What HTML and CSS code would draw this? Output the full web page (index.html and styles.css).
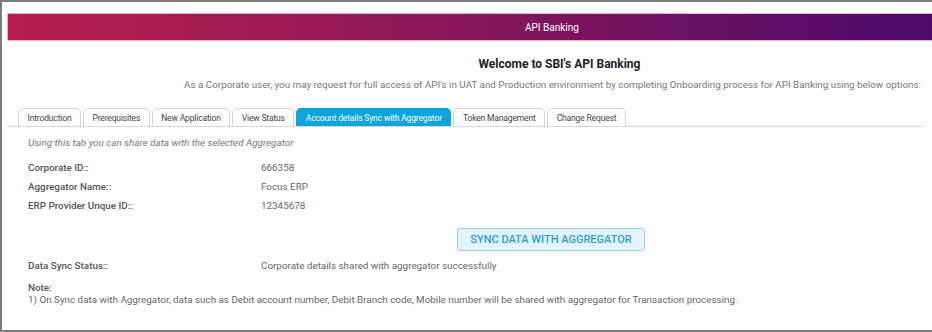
FILE: index.html
```html
<!DOCTYPE html>
<html lang="en">
<head>
  <meta charset="UTF-8" />
  <title>API Banking</title>
  <link rel="stylesheet" href="styles.css">
</head>
<body>
  <div class="frame">
    <header class="topbar">
      <span>API Banking</span>
    </header>

    <div class="intro">
      <h1>Welcome to SBI's API Banking</h1>
      <p>As a Corporate user, you may request for full access of API's in UAT and Production environment by completing Onboarding process for API Banking using below options:</p>
    </div>

    <nav class="tabs">
      <div class="tab">Introduction</div>
      <div class="tab">Prerequisites</div>
      <div class="tab">New Application</div>
      <div class="tab">View Status</div>
      <div class="tab active">Account details Sync with Aggregator</div>
      <div class="tab">Token Management</div>
      <div class="tab">Change Request</div>
    </nav>

    <div class="panel">
      <p class="hint">Using this tab you can share data with the selected Aggregator</p>

      <div class="details">
        <div class="row"><span class="label">Corporate ID::</span><span class="value">666358</span></div>
        <div class="row"><span class="label">Aggregator Name::</span><span class="value">Focus ERP</span></div>
        <div class="row"><span class="label">ERP Provider Unque ID::</span><span class="value">12345678</span></div>
      </div>

      <div class="action">
        <button class="sync-btn">SYNC DATA WITH AGGREGATOR</button>
      </div>

      <div class="row status"><span class="label">Data Sync Status::</span><span class="value">Corporate details shared with aggregator successfully</span></div>

      <div class="note">
        <strong>Note:</strong>
        <p>1) On Sync data with Aggregator, data such as Debit account number, Debit Branch code, Mobile number will be shared with aggregator for Transaction processing.</p>
      </div>
    </div>
  </div>
</body>
</html>
```

FILE: styles.css
```css
* { box-sizing: border-box; margin: 0; padding: 0; }

body {
  font-family: Roboto, "Liberation Sans", sans-serif;
  background: #fff;
  color: #666;
  font-size: 9.85px;
}

.frame {
  width: 932px;
  height: 332px;
  border: 2px solid #7c7c7c;
  border-right: 0;
  padding: 11px 0 0 5px;
  overflow: hidden;
}

.topbar {
  height: 28px;
  background: linear-gradient(90deg, #b91e4f, #8e1758 45%, #4b0a6c);
  border: 1px solid #e6b6c8;
  border-right: 0;
  color: #fff;
  font-size: 10px;
  display: flex;
  align-items: center;
  padding-left: 517px;
}

.intro {
  text-align: center;
  padding-left: 170px;
  margin-right: 4px;
}

.intro h1 {
  font-size: 12px;
  font-weight: bold;
  color: #222;
  margin-top: 16px;
  padding-left: 14px;
}

.intro p {
  margin-top: 8px;
  color: #777;
  white-space: nowrap;
}

.tabs {
  display: flex;
  gap: 2px;
  margin-top: 18px;
  padding-left: 11px;
  border-bottom: 1px solid #d8d8d8;
  margin-right: 7px;
}

.tab {
  height: 18px;
  padding: 0 8.5px;
  display: flex;
  align-items: center;
  border: 1px solid #d4d4d4;
  border-bottom: 0;
  border-radius: 5px 5px 0 0;
  font-size: 8.5px;
  color: #444;
  letter-spacing: -0.15px;
}

.tab.active {
  background: #0ba4dc;
  border-color: #0ba4dc;
  color: #fff;
}

.panel {
  padding-left: 21px;
}

.hint {
  font-style: italic;
  color: #777;
  margin-top: 10px;
}

.details {
  margin-top: 15px;
}

.row {
  display: flex;
  margin-top: 9px;
  line-height: 10px;
}

.label {
  width: 233px;
  font-weight: 500;
  color: #555;
}

.value {
  color: #666;
}

.action {
  margin-top: 17px;
  padding-left: 429px;
}

.sync-btn {
  width: 188px;
  height: 23px;
  background: #e4f4fc;
  border: 1px solid #8fd1f0;
  border-radius: 3px;
  color: #2a9fd8;
  font-family: Roboto, "Liberation Sans", sans-serif;
  font-size: 11px;
  font-weight: 500;
}

.status {
  margin-top: 10px;
}

.note {
  margin-top: 11px;
  line-height: 12px;
}

.note strong {
  display: block;
  font-weight: 500;
  color: #555;
}
```
